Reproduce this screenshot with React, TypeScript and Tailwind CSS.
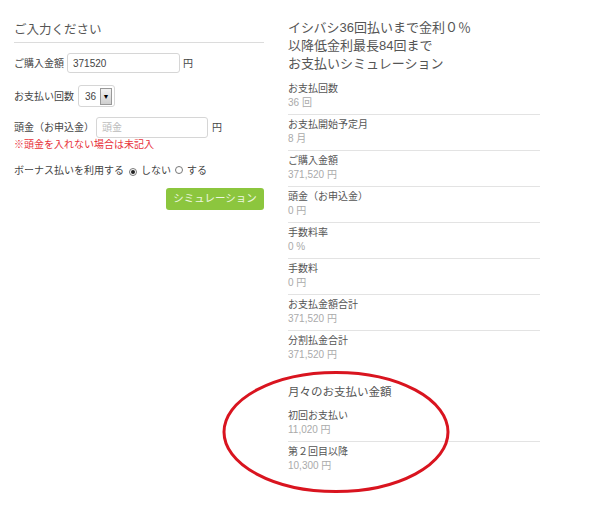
import React from "react";

const font = { fontFamily: '"Liberation Sans", "Noto Sans CJK JP", sans-serif' };

const results = [
  { label: "お支払回数", value: "36 回" },
  { label: "お支払開始予定月", value: "8 月" },
  { label: "ご購入金額", value: "371,520 円" },
  { label: "頭金（お申込金）", value: "0 円" },
  { label: "手数料率", value: "0 %" },
  { label: "手数料", value: "0 円" },
  { label: "お支払金額合計", value: "371,520 円" },
  { label: "分割払金合計", value: "371,520 円" },
];

const monthly = [
  { label: "初回お支払い", value: "11,020 円" },
  { label: "第２回目以降", value: "10,300 円" },
];

function ResultItem({ label, value, last }: { label: string; value: string; last?: boolean }) {
  return (
    <div className={`pt-[3px] pb-[4px] ${last ? "" : "border-b border-[#e3e3e3]"}`}>
      <p className="text-[10px] leading-[14px] text-[#555]">{label}</p>
      <p className="text-[10px] leading-[14px] text-[#aaa]">{value}</p>
    </div>
  );
}

function Radio({ checked }: { checked?: boolean }) {
  return (
    <span className="inline-flex h-[8px] w-[8px] items-center justify-center rounded-full border border-[#777] bg-white">
      {checked ? <span className="h-[4px] w-[4px] rounded-full bg-[#222]" /> : null}
    </span>
  );
}

export default function App() {
  return (
    <div className="relative flex h-[511px] w-[600px] gap-[24px] bg-white px-[14px]" style={font}>
      {/* 入力フォーム */}
      <div className="flex w-[250px] flex-col pt-[20px]">
        <h2 className="border-b border-[#dcdcdc] pb-[2px] text-[12.5px] leading-[20px] text-[#555]">ご入力ください</h2>

        <div className="mt-[10px] flex h-[20px] items-center text-[10px] text-[#444]">
          <span className="w-[53px]">ご購入金額</span>
          <div className="flex h-[20px] w-[113px] items-center rounded-[3px] border border-[#d6d6d6] px-[5px] text-[10px] text-[#444]">371520</div>
          <span className="ml-[3px]">円</span>
        </div>

        <div className="mt-[12px] flex h-[22px] items-center text-[10px] text-[#444]">
          <span className="w-[64px]">お支払い回数</span>
          <div className="flex h-[22px] w-[37px] items-center rounded-[3px] border border-[#d6d6d6] pl-[6px] pr-[2px]">
            <span className="flex-1">36</span>
            <span className="flex h-[17px] w-[12px] items-center justify-center border border-[#999] bg-gradient-to-b from-[#f2f2f2] to-[#cfcfcf] text-[7px] leading-none text-black">▼</span>
          </div>
        </div>

        <div className="mt-[10px] flex h-[21px] items-center text-[10px] text-[#444]">
          <span className="w-[82px]">頭金（お申込金）</span>
          <div className="flex h-[21px] w-[112px] items-center rounded-[3px] border border-[#d6d6d6] px-[5px] text-[#bbb]">頭金</div>
          <span className="ml-[4px]">円</span>
        </div>

        <p className="text-[10px] leading-[14px] text-[#e8323a]">※頭金を入れない場合は未記入</p>

        <div className="mt-[11px] flex h-[14px] items-center text-[10px] text-[#444]">
          <span>ボーナス払いを利用する</span>
          <span className="ml-[5px]"><Radio checked /></span>
          <span className="ml-[4px]">しない</span>
          <span className="ml-[4px]"><Radio /></span>
          <span className="ml-[4px]">する</span>
        </div>

        <button className="mt-[11px] h-[22px] w-[98px] self-end rounded-[3px] bg-[#8cc63e] text-[10.5px] text-[#eef7e0]">シミュレーション</button>
      </div>

      {/* シミュレーション結果 */}
      <div className="flex w-[252px] flex-col pt-[19px]">
        <h2 className="text-[13px] leading-[18px] text-[#555]">
          イシバシ36回払いまで金利０％
          <br />
          以降低金利最長84回まで
          <br />
          お支払いシミュレーション
        </h2>

        <div className="mt-[6px]">
          {results.map((r, i) => (
            <ResultItem key={r.label} label={r.label} value={r.value} last={i === results.length - 1} />
          ))}
        </div>

        <h3 className="mt-[18px] text-[11.5px] leading-[16px] text-[#555]">月々のお支払い金額</h3>
        <div className="mt-[6px]">
          {monthly.map((r, i) => (
            <ResultItem key={r.label} label={r.label} value={r.value} last={i === monthly.length - 1} />
          ))}
        </div>
      </div>

      {/* 赤丸 */}
      <svg className="pointer-events-none absolute left-[221px] top-[370px]" width="230" height="124" viewBox="0 0 230 124">
        <ellipse cx="115" cy="62" rx="112" ry="59.5" fill="none" stroke="#d9141f" strokeWidth="3" />
      </svg>
    </div>
  );
}
